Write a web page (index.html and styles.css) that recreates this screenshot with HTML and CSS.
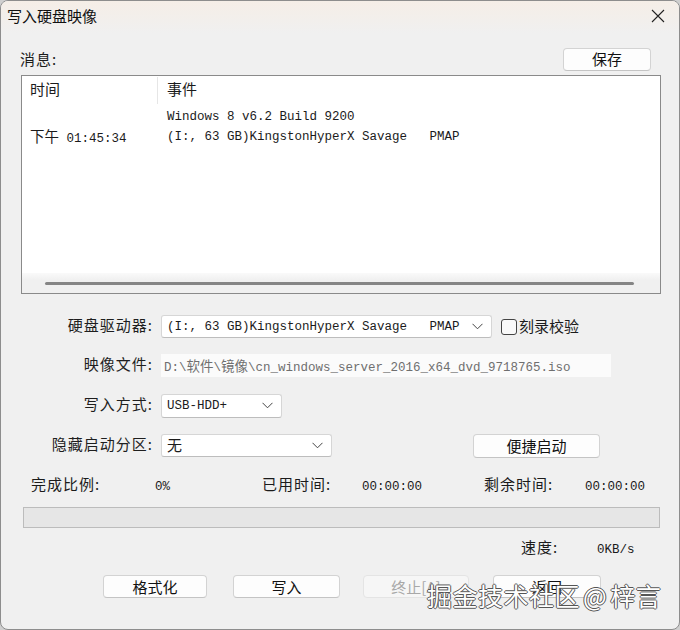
FILE: index.html
```html
<!DOCTYPE html>
<html>
<head>
<meta charset="utf-8">
<link rel="stylesheet" href="styles.css">
</head>
<body>
<div class="window">
  <div class="titlebar">
    <span class="title">写入硬盘映像</span>
    <svg class="close" width="14" height="14" viewBox="0 0 14 14"><path d="M1 1L13 13M13 1L1 13" stroke="#222" stroke-width="1.1" fill="none"/></svg>
  </div>

  <div class="msg-head">
    <span class="label">消息:</span>
    <button class="btn btn-save">保存</button>
  </div>

  <div class="list">
    <div class="list-head">
      <div class="col1">时间</div>
      <div class="col2">事件</div>
    </div>
    <div class="list-row first">
      <div class="col1"></div>
      <div class="col2 mono">Windows 8 v6.2 Build 9200</div>
    </div>
    <div class="list-row">
      <div class="col1 mono"><span class="cjk">下午</span> 01:45:34</div>
      <div class="col2 mono">(I:, 63 GB)KingstonHyperX Savage   PMAP</div>
    </div>
    <div class="list-fill"></div>
    <div class="hscroll"><div class="thumb"></div></div>
  </div>

  <div class="form">
    <div class="flabel">硬盘驱动器:</div>
    <div class="fctl">
      <div class="select sel-drive">
        <span class="mono">(I:, 63 GB)KingstonHyperX Savage   PMAP</span>
        <svg class="chev" width="11" height="7" viewBox="0 0 11 7"><path d="M0.5 0.8L5.5 5.8L10.5 0.8" stroke="#444" stroke-width="1" fill="none"/></svg>
      </div>
      <span class="checkbox"></span>
      <span class="cb-label">刻录校验</span>
    </div>

    <div class="flabel">映像文件:</div>
    <div class="fctl">
      <div class="input-disabled mono">D:\<span class="cjk2">软件</span>\<span class="cjk2">镜像</span>\cn_windows_server_2016_x64_dvd_9718765.iso</div>
    </div>

    <div class="flabel">写入方式:</div>
    <div class="fctl">
      <div class="select sel-mode">
        <span class="mono">USB-HDD+</span>
        <svg class="chev" width="11" height="7" viewBox="0 0 11 7"><path d="M0.5 0.8L5.5 5.8L10.5 0.8" stroke="#444" stroke-width="1" fill="none"/></svg>
      </div>
    </div>

    <div class="flabel">隐藏启动分区:</div>
    <div class="fctl">
      <div class="select sel-hide">
        <span class="cjk-sel">无</span>
        <svg class="chev" width="11" height="7" viewBox="0 0 11 7"><path d="M0.5 0.8L5.5 5.8L10.5 0.8" stroke="#444" stroke-width="1" fill="none"/></svg>
      </div>
      <button class="btn btn-quick">便捷启动</button>
    </div>
  </div>

  <div class="status">
    <span class="label">完成比例:</span>
    <span class="mono">0%</span>
    <span class="label">已用时间:</span>
    <span class="mono">00:00:00</span>
    <span class="label">剩余时间:</span>
    <span class="mono">00:00:00</span>
  </div>

  <div class="progress"></div>

  <div class="speed">
    <span class="label">速度:</span>
    <span class="mono">0KB/s</span>
  </div>

  <div class="actions">
    <button class="btn act act-1">格式化</button>
    <button class="btn act act-2">写入</button>
    <button class="btn act act-3 disabled">终止[A]</button>
    <button class="btn act act-4">返回</button>
  </div>

  <div class="watermark">掘金技术社区 @ 梓言</div>
</div>
</body>
</html>
```

FILE: styles.css
```css
* { box-sizing: border-box; }

html, body {
  margin: 0;
  padding: 0;
  background: #cfcfcf;
}

body {
  width: 680px;
  height: 630px;
  font-family: "Noto Sans CJK SC", "Noto Sans", sans-serif;
  color: #1b1b1b;
}

.window {
  position: relative;
  width: 680px;
  height: 630px;
  border: 1px solid #8d8d8d;
  border-radius: 8px;
  background: #f0f0f0;
  overflow: hidden;
  display: flex;
  flex-direction: column;
}

.titlebar {
  height: 32px;
  flex: none;
  display: flex;
  align-items: center;
  justify-content: space-between;
  padding: 0 14px 0 6px;
  background: linear-gradient(#f5eee7, #f2efec 60%, #f0f0f0);
}

.title {
  font-size: 15px;
  line-height: 18px;
  color: #111;
  margin-top: -3px;
}

.close { display: block; margin-top: -2px; }

.label {
  font-size: 15px;
  line-height: 20px;
  letter-spacing: 1px;
}

.mono {
  font-family: "Liberation Mono", "Noto Sans CJK SC", monospace;
  font-size: 12.5px;
  letter-spacing: 0;
  white-space: pre;
}

.cjk {
  font-family: "Noto Sans CJK SC", sans-serif;
  font-size: 14.5px;
}

.cjk2 {
  font-family: "Noto Sans CJK SC", sans-serif;
  font-size: 13.5px;
}

.btn {
  font-family: "Noto Sans CJK SC", sans-serif;
  font-size: 15px;
  line-height: 20px;
  color: #111;
  background: #fdfdfd;
  border: 1px solid #d3d3d3;
  border-bottom-color: #c4c4c4;
  border-radius: 4px;
  padding: 0;
  margin: 0;
}

.msg-head {
  margin-top: 15px;
  height: 22px;
  display: flex;
  align-items: center;
  justify-content: space-between;
  padding: 0 28px 0 19px;
}

.btn-save {
  width: 88px;
  height: 23px;
}

.list {
  margin: 5px 0 0 20px;
  width: 640px;
  height: 219px;
  border: 1px solid #8a8a8a;
  background: #fff;
  display: flex;
  flex-direction: column;
}

.list-head {
  height: 29px;
  display: flex;
  align-items: center;
  font-size: 15px;
  line-height: 20px;
}

.list-head .col1 {
  height: 27px;
  display: flex;
  align-items: center;
  padding-bottom: 4px;
  border-right: 1px solid #e6e6e6;
}

.list-head .col2 {
  padding-bottom: 4px;
}

.col1 {
  width: 136px;
  padding-left: 8px;
  flex: none;
}

.col2 {
  padding-left: 9px;
}

.list-row {
  height: 20px;
  display: flex;
  align-items: center;
  line-height: 20px;
}

.list-row.first { margin-top: 2px; }

.list-fill { flex: 1; }

.hscroll {
  height: 20px;
  background: linear-gradient(#fafafa, #f0f0f0 35%);
  display: flex;
  align-items: center;
  padding-left: 23px;
}

.thumb {
  width: 589px;
  height: 3px;
  border-radius: 2px;
  background: #858585;
}

.form {
  margin-top: 21px;
  display: grid;
  grid-template-columns: 152px auto;
  column-gap: 8px;
  grid-template-rows: 23px 23px 24px 24px;
  row-gap: 16px;
}

.form > :nth-child(5), .form > :nth-child(6) { margin-top: 1px; }
.form > :nth-child(7), .form > :nth-child(8) { margin-top: 1px; }

.flabel {
  font-size: 15px;
  line-height: 20px;
  letter-spacing: 1px;
  text-align: right;
  color: #1e1e1e;
}

.fctl {
  display: flex;
  align-items: center;
}

.select {
  height: 23px;
  background: #fff;
  border: 1px solid #d6d6d6;
  border-bottom-color: #bdbdbd;
  border-radius: 3px;
  display: flex;
  align-items: center;
  justify-content: space-between;
  padding: 0 8px 0 5px;
  line-height: 20px;
}

.sel-drive { width: 331px; }
.sel-mode { width: 121px; height: 24px; }
.sel-hide { width: 171px; }

.chev { display: block; }

.cjk-sel {
  font-size: 15px;
  margin-top: -1px;
}

.checkbox {
  width: 16px;
  height: 16px;
  border: 1px solid #444;
  border-radius: 3px;
  margin-left: 9px;
  background: #f9f9f9;
}

.cb-label {
  font-size: 15px;
  line-height: 20px;
  margin-left: 2px;
  margin-top: -1px;
}

.input-disabled {
  width: 450px;
  height: 23px;
  background: #fbfbfb;
  color: #6f6f6f;
  padding-left: 3px;
  line-height: 23px;
}

.btn-quick {
  margin-left: 141px;
  width: 127px;
  height: 24px;
}

.status {
  margin-top: 19px;
  height: 20px;
  display: grid;
  grid-template-columns: 124px 107px 100px 122px 101px auto;
  align-items: baseline;
  padding-left: 30px;
}

.status .label { margin-top: -2px; }

.progress {
  margin: 11px 0 0 22px;
  width: 637px;
  height: 21px;
  background: #e6e6e6;
  border: 1px solid #bcbcbc;
}

.speed {
  margin-top: 9px;
  height: 20px;
  display: grid;
  grid-template-columns: 76px auto;
  align-items: baseline;
  padding-left: 520px;
}

.actions {
  margin-top: 18px;
  display: flex;
  padding-left: 102px;
}

.act { height: 23px; }
.act-1 { width: 104px; }
.act-2 { width: 107px; margin-left: 26px; }
.act-3 { width: 106px; margin-left: 23px; }
.act-4 { width: 108px; margin-left: 24px; }

.btn.disabled {
  color: #a8a8a8;
  background: #f6f6f6;
  border-color: #e4e4e4;
}

.watermark {
  position: absolute;
  left: 426px;
  top: 578px;
  font-family: "Noto Sans CJK SC", sans-serif;
  font-size: 25px;
  line-height: 32px;
  color: #fff;
  letter-spacing: 0.5px;
  word-spacing: -3px;
  text-shadow: 1px 0 0 #555, -1px 0 0 #555, 0 1px 0 #555, 0 -1px 0 #555;
  white-space: nowrap;
}
```
